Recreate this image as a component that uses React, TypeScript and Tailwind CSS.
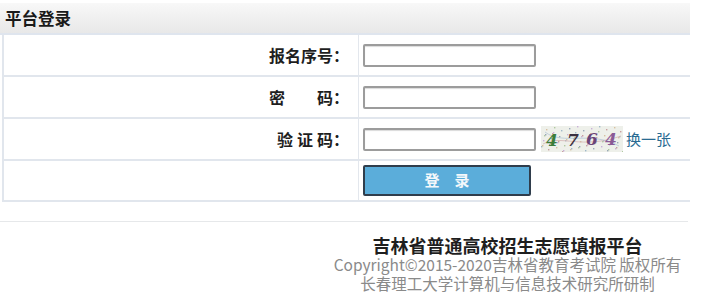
import type { JSX } from 'react';

/** Small deterministic noise for the captcha picture */
const noise = Array.from({ length: 70 }, (_, i) => {
  const x = (i * 37 + 11) % 82;
  const y = (i * 53 + 7) % 26;
  const colors = ['#c9a0a0', '#a0b8c9', '#b0c9a0', '#c9b0d8', '#d8c0a0', '#9aa8b8'];
  return { x, y, c: colors[i % colors.length] };
});

const Captcha = (): JSX.Element => (
  <svg width="82" height="26" viewBox="0 0 82 26" className="block">
    <rect width="82" height="26" fill="#eef0ea" />
    {noise.map((d, i) => (
      <rect key={i} x={d.x} y={d.y} width="1.4" height="1.4" fill={d.c} />
    ))}
    <path d="M2 18 C 20 8, 40 24, 80 10" stroke="#d6b4b4" strokeWidth="0.8" fill="none" />
    <path d="M4 6 C 22 20, 50 4, 78 20" stroke="#b4c6d6" strokeWidth="0.8" fill="none" />
    <g fontFamily="'DejaVu Serif', serif" fontStyle="italic" fontWeight="bold" fontSize="17">
      <text x="5" y="20" fill="#3d7d3a">4</text>
      <text x="26" y="20" fill="#3a3040">7</text>
      <text x="45" y="19" fill="#6a4478">6</text>
      <text x="64" y="19" fill="#8a5a96">4</text>
    </g>
  </svg>
);

const Field = (): JSX.Element => (
  <input
    type="text"
    className="h-[23px] w-[173px] rounded-[2px] border-2 border-[#9c9c9c] bg-white shadow-[inset_0_1px_1px_rgba(0,0,0,0.15)] outline-none"
  />
);

const Row = ({ label, children, last }: { label: JSX.Element; children: JSX.Element; last?: boolean }): JSX.Element => (
  <div className={`grid grid-cols-[355px_1fr] border-b-2 border-[#e1e6ed] ${last ? 'h-[41px]' : 'h-[42px]'}`}>
    <div className="flex items-center justify-end border-r border-[#e3e7ed] pr-[9px] text-[16px] font-bold text-[#1e1e1e]">
      {label}
    </div>
    <div className="flex items-center pl-[4px]">{children}</div>
  </div>
);

export default function App(): JSX.Element {
  return (
    <div className="h-[295px] w-[705px] overflow-hidden bg-white pt-[3px] font-['Noto_Sans_CJK_SC',sans-serif]">
      {/* Panel title bar */}
      <div className="flex h-[32px] w-[690px] items-center border-b-2 border-[#dfe5ee] bg-gradient-to-b from-[#f8f8f8] to-[#e8e8e8] pl-[5px] text-[16.5px] font-bold text-[#1a1a1a]">
        平台登录
      </div>

      {/* Login form */}
      <div className="ml-[2px] w-[688px] border-l-2 border-[#e1e6ed]">
        <Row label={<span>报名序号：</span>}>
          <Field />
        </Row>
        <Row label={<span>密　　码：</span>}>
          <Field />
        </Row>
        <Row
          label={
            <span>
              <span className="tracking-[4px]">验证</span>码：
            </span>
          }
        >
          <div className="flex items-center">
            <Field />
            <div className="ml-[5px]">
              <Captcha />
            </div>
            <a href="#" className="ml-[3px] text-[15px] text-[#2a6b92]">
              换一张
            </a>
          </div>
        </Row>
        <Row label={<span />} last>
          <button className="h-[31px] w-[168px] rounded-[2px] border-2 border-[#2f3d4c] bg-[#5badda] text-[15px] font-bold text-[#f4f8fb]">
            登　录
          </button>
        </Row>
      </div>

      {/* Footer */}
      <div className="mt-[19px] w-[688px] border-t border-[#e6e8ea] pl-[327px] pt-[14px] text-center">
        <div className="text-[18px] font-bold leading-[19px] text-[#1e1e1e]">吉林省普通高校招生志愿填报平台</div>
        <div className="whitespace-nowrap text-[15.5px] leading-[19px] text-[#8a8a8a]">
          Copyright©2015-2020吉林省教育考试院 版权所有
        </div>
        <div className="text-[15.5px] leading-[19px] text-[#8a8a8a]">长春理工大学计算机与信息技术研究所研制</div>
      </div>
    </div>
  );
}
